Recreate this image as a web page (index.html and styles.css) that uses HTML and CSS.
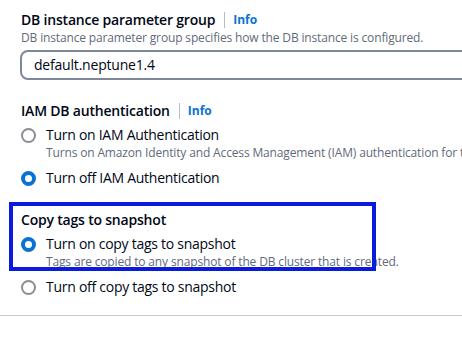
FILE: index.html
```html
<!DOCTYPE html>
<html lang="en">
<head>
    <meta charset="UTF-8">
    <meta name="viewport" content="width=device-width, initial-scale=1.0">
    <title>Database options</title>
    <link rel="stylesheet" href="styles.css">
</head>
<body>

    <div class="page">
        <!-- Parameter group -->
        <div class="field">
            <div class="label">
                <span>DB instance parameter group</span>
                <span class="sep"></span>
                <a class="info" href="#">Info</a>
            </div>
            <div class="desc">DB instance parameter group specifies how the DB instance is configured.</div>
            <div class="select">default.neptune1.4</div>
        </div>

        <!-- IAM -->
        <div class="field">
            <div class="label">
                <span>IAM DB authentication</span>
                <span class="sep"></span>
                <a class="info" href="#">Info</a>
            </div>
            <div class="options">
                <div class="option">
                    <span class="radio"></span>
                    <div>
                        <div class="option-text">Turn on IAM Authentication</div>
                        <div class="desc">Turns on Amazon Identity and Access Management (IAM) authentication for the database</div>
                    </div>
                </div>
                <div class="option">
                    <span class="radio checked"></span>
                    <div class="option-text">Turn off IAM Authentication</div>
                </div>
            </div>
        </div>

        <!-- Copy tags -->
        <div class="field highlight-wrap">
            <div class="label">Copy tags to snapshot</div>
            <div class="options">
                <div class="option">
                    <span class="radio checked"></span>
                    <div>
                        <div class="option-text">Turn on copy tags to snapshot</div>
                        <div class="desc">Tags are copied to any snapshot of the DB cluster that is created.</div>
                    </div>
                </div>
                <div class="option">
                    <span class="radio"></span>
                    <div class="option-text">Turn off copy tags to snapshot</div>
                </div>
            </div>
            <div class="highlight"></div>
        </div>
    </div>

    <hr class="divider">

</body>
</html>
```

FILE: styles.css
```css
body {
    margin: 0;
    font-family: "Open Sans", Arial, sans-serif;
    color: #000716;
    background-color: #fff;
    overflow: hidden;
}
.page {
    width: 640px;
    padding: 9px 0 0 21px;
}
.field {
    margin-bottom: 20px;
}
.label {
    display: flex;
    align-items: center;
    font-size: 14px;
    font-weight: 600;
    line-height: 22px;
    letter-spacing: -0.2px;
}
.sep {
    width: 1px;
    height: 16px;
    background-color: #b6bec9;
    margin: 0 8px 0 9px;
}
.info {
    font-size: 12px;
    font-weight: 700;
    color: #0972d3;
    text-decoration: none;
    letter-spacing: 0;
}
.desc {
    font-size: 12px;
    line-height: 16px;
    color: #5f6b7a;
    margin-top: -1px;
    letter-spacing: -0.15px;
    white-space: nowrap;
}
.select {
    margin-top: 4px;
    width: 600px;
    height: 26px;
    border: 2px solid #7d8998;
    border-radius: 8px;
    padding-left: 12px;
    font-size: 14px;
    line-height: 26px;
    margin-left: -1px;
    letter-spacing: -0.2px;
}
.options {
    display: flex;
    flex-direction: column;
    gap: 6px;
    margin-top: 2px;
}
.option {
    display: flex;
    align-items: flex-start;
    gap: 10px;
}
.option-text {
    font-size: 14px;
    line-height: 22px;
    letter-spacing: -0.27px;
}
.radio {
    box-sizing: border-box;
    flex: none;
    width: 15px;
    height: 15px;
    margin-top: 4px;
    border: 2px solid #8c8c94;
    border-radius: 50%;
}
.radio.checked {
    border: 4.5px solid #0972d3;
    background-color: #fff;
}
.highlight-wrap {
    position: relative;
    margin-bottom: 0;
}
.highlight {
    position: absolute;
    left: -12px;
    top: -7px;
    width: 359px;
    height: 61px;
    border: 4px solid #0b1bdc;
}
.divider {
    border: none;
    border-top: 1px solid #c6c6cd;
    margin: 17px 0 0;
}
```
